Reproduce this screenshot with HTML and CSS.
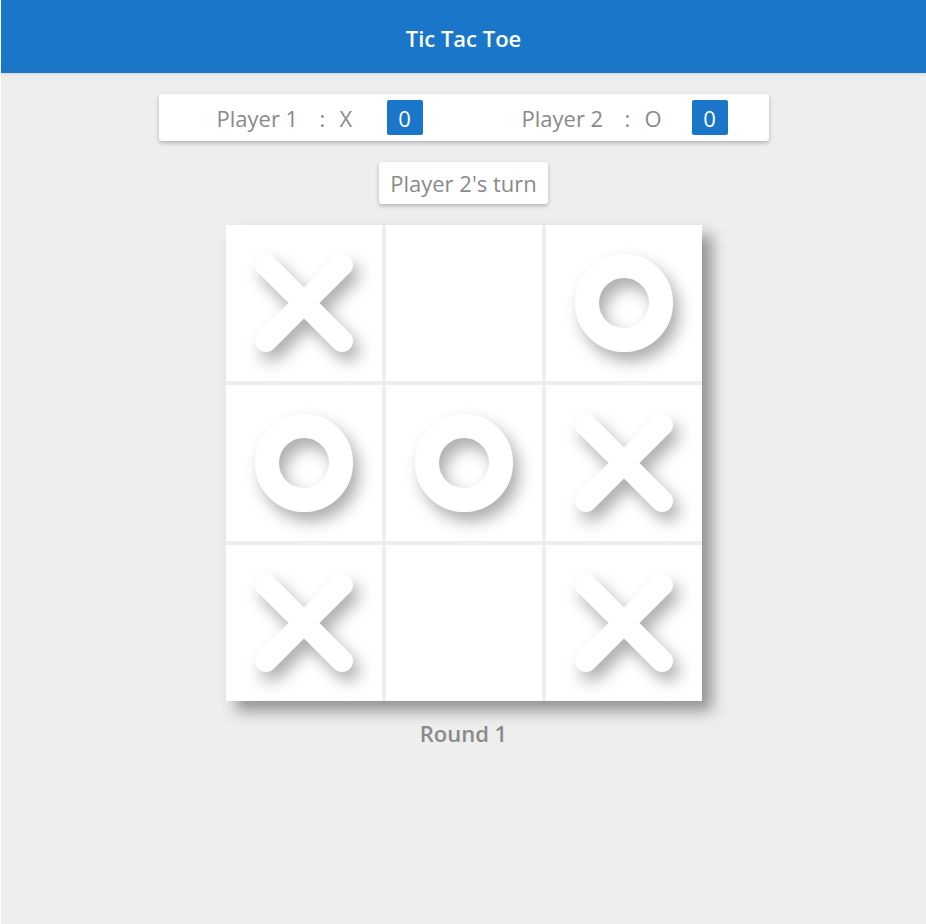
FILE: index.html
```html
<!DOCTYPE html>
<html>
<head>
<meta charset="utf-8">
<title>Tic Tac Toe</title>
<link rel="stylesheet" href="styles.css">
</head>
<body>
<header class="topbar"><h1 class="title">Tic Tac Toe</h1></header>
<main class="main">
  <section class="scoreboard">
    <div class="player">
      <span class="pname">Player 1</span><span class="sep">:</span><span class="mark">X</span>
      <span class="badge">0</span>
    </div>
    <div class="player">
      <span class="pname">Player 2</span><span class="sep">:</span><span class="mark">O</span>
      <span class="badge">0</span>
    </div>
  </section>
  <div class="turn">Player 2's turn</div>
  <section class="board">
    <div class="cell"><svg class="sym" viewBox="0 0 100 100"><path d="M12 12 L88 88 M88 12 L12 88"/></svg></div>
    <div class="cell"></div>
    <div class="cell"><svg class="sym" viewBox="0 0 100 100"><circle cx="50" cy="50" r="37"/></svg></div>
    <div class="cell"><svg class="sym" viewBox="0 0 100 100"><circle cx="50" cy="50" r="37"/></svg></div>
    <div class="cell"><svg class="sym" viewBox="0 0 100 100"><circle cx="50" cy="50" r="37"/></svg></div>
    <div class="cell"><svg class="sym" viewBox="0 0 100 100"><path d="M12 12 L88 88 M88 12 L12 88"/></svg></div>
    <div class="cell"><svg class="sym" viewBox="0 0 100 100"><path d="M12 12 L88 88 M88 12 L12 88"/></svg></div>
    <div class="cell"></div>
    <div class="cell"><svg class="sym" viewBox="0 0 100 100"><path d="M12 12 L88 88 M88 12 L12 88"/></svg></div>
  </section>
  <div class="round">Round 1</div>
</main>
</body>
</html>
```
FILE: styles.css
```css
html { background: #ffffff; }
body {
  margin: 0 0 0 1px;
  min-height: 924px;
  background: #eeeeee;
  font-family: "Open Sans", "Noto Sans", sans-serif;
  color: #8a8a8a;
}
.topbar {
  height: 73px;
  background: #1976c8;
  display: flex;
  align-items: center;
  justify-content: center;
  box-shadow: 0 1px 3px rgba(0,0,0,0.12);
}
.title {
  margin: 0;
  color: #ffffff;
  font-size: 22px;
  font-weight: 600;
  padding-top: 2px;
}
.main {
  display: flex;
  flex-direction: column;
  align-items: center;
  padding-top: 21px;
}
.scoreboard {
  width: 610px;
  height: 47px;
  box-sizing: border-box;
  background: #ffffff;
  border-radius: 3px;
  box-shadow: 0 2px 4px rgba(0,0,0,0.25);
  display: grid;
  grid-template-columns: 1fr 1fr;
}
.player {
  display: flex;
  align-items: center;
  padding-left: 58px;
  font-size: 22px;
}
.pname { width: 103px; }
.sep { width: 20px; }
.mark { width: 47px; }
.badge {
  width: 36px;
  height: 35px;
  background: #1976c8;
  color: #ffffff;
  border-radius: 2px;
  display: flex;
  align-items: center;
  justify-content: center;
  font-size: 22px;
}
.turn {
  margin-top: 21px;
  height: 42px;
  padding: 0 11px;
  box-sizing: border-box;
  background: #ffffff;
  border-radius: 3px;
  box-shadow: 0 2px 4px rgba(0,0,0,0.25);
  display: flex;
  align-items: center;
  font-size: 22px;
}
.board {
  margin-top: 21px;
  display: grid;
  grid-template-columns: repeat(3, 156px);
  grid-template-rows: repeat(3, 156px);
  gap: 4px;
  background: #eeeeee;
  box-shadow: 10px 10px 14px rgba(0,0,0,0.38);
}
.cell {
  background: #ffffff;
  display: flex;
  align-items: center;
  justify-content: center;
}
.sym {
  width: 100px;
  height: 100px;
  fill: none;
  stroke: #ffffff;
  filter: drop-shadow(6px 9px 8px rgba(0,0,0,0.33));
}
.sym path { stroke-width: 22; stroke-linecap: round; }
.sym circle { stroke-width: 24; }
.round {
  margin-top: 17px;
  font-size: 22px;
  font-weight: 600;
}
```
